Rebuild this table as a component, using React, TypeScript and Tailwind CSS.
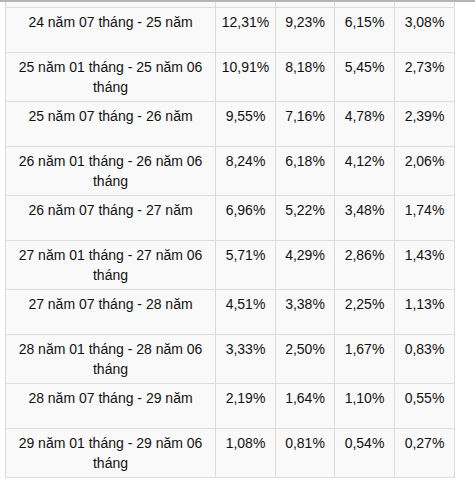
import React from "react";

const rows: [string, string, string, string, string][] = [
  ["24 năm 07 tháng - 25 năm", "12,31%", "9,23%", "6,15%", "3,08%"],
  ["25 năm 01 tháng - 25 năm 06 tháng", "10,91%", "8,18%", "5,45%", "2,73%"],
  ["25 năm 07 tháng - 26 năm", "9,55%", "7,16%", "4,78%", "2,39%"],
  ["26 năm 01 tháng - 26 năm 06 tháng", "8,24%", "6,18%", "4,12%", "2,06%"],
  ["26 năm 07 tháng - 27 năm", "6,96%", "5,22%", "3,48%", "1,74%"],
  ["27 năm 01 tháng - 27 năm 06 tháng", "5,71%", "4,29%", "2,86%", "1,43%"],
  ["27 năm 07 tháng - 28 năm", "4,51%", "3,38%", "2,25%", "1,13%"],
  ["28 năm 01 tháng - 28 năm 06 tháng", "3,33%", "2,50%", "1,67%", "0,83%"],
  ["28 năm 07 tháng - 29 năm", "2,19%", "1,64%", "1,10%", "0,55%"],
  ["29 năm 01 tháng - 29 năm 06 tháng", "1,08%", "0,81%", "0,54%", "0,27%"],
];

const App = () => {
  return (
    <div
      className="w-[475px] h-[481px] bg-white overflow-hidden text-[14px] text-[#111]"
      style={{ fontFamily: '"Liberation Sans", Arial, sans-serif' }}
    >
      <div className="h-[2px] bg-[#b4b4b4]" />
      <div className="pl-[5px]">
        <table className="table-fixed border-collapse w-[449px] bg-[#f9f9f9]">
          <colgroup>
            <col className="w-[210px]" />
            <col className="w-[60px]" />
            <col className="w-[59px]" />
            <col className="w-[60px]" />
            <col className="w-[60px]" />
          </colgroup>
          <tbody>
            <tr>
              {[0, 1, 2, 3, 4].map((i) => (
                <td key={i} className="border-x border-[#dcdcdc] p-0 h-[5px]" />
              ))}
            </tr>
            {rows.map((r) => (
              <tr key={r[0]}>
                {r.map((c, i) => (
                  <td
                    key={i}
                    className={`border border-[#dcdcdc] align-top text-center py-1 ${i === 0 ? "px-2" : "px-0"}`}
                  >
                    <div className="min-h-[36px] leading-5">{c}</div>
                  </td>
                ))}
              </tr>
            ))}
          </tbody>
        </table>
      </div>
    </div>
  );
};

export default App;
